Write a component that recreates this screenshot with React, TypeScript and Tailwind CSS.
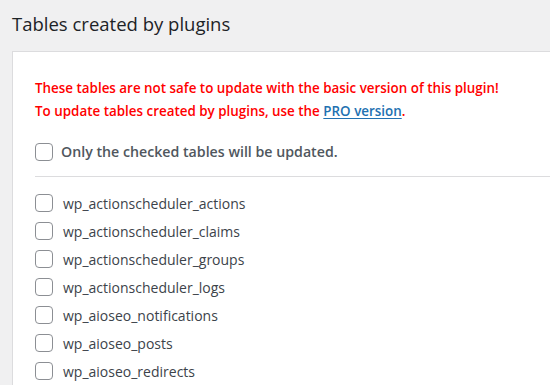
import React from 'react';

const tables = [
  'wp_actionscheduler_actions',
  'wp_actionscheduler_claims',
  'wp_actionscheduler_groups',
  'wp_actionscheduler_logs',
  'wp_aioseo_notifications',
  'wp_aioseo_posts',
  'wp_aioseo_redirects',
];

function Box() {
  return <span className="block w-[18px] h-[18px] shrink-0 rounded-[4px] border border-[#8c8f94] bg-white" />;
}

export default function App() {
  return (
    <div
      className="w-[550px] h-[385px] overflow-hidden bg-[#f0f0f1] text-[#3c434a]"
      style={{ fontFamily: '"Open Sans", "Noto Sans", sans-serif' }}
    >
      {/* HEADER */}
      <h2 className="pl-3 pt-[11px] h-[51px] text-[18.5px] leading-[26px] text-[#1d2327]">Tables created by plugins</h2>

      {/* PANEL */}
      <div className="ml-3 w-[600px] border-l border-t border-[#dcdcde] bg-white pl-[22px] pt-[25px]">
        <p className="text-[13.4px] font-semibold leading-[23px] text-[#ff0000]">
          These tables are not safe to update with the basic version of this plugin!
          <br />
          To update tables created by plugins, use the{' '}
          <a className="text-[#2271b1] underline underline-offset-2">PRO version</a>.
        </p>

        <label className="mt-[20px] flex items-center gap-[8px] h-[18px]">
          <Box />
          <span className="text-[14.2px] font-semibold text-[#50575e]">Only the checked tables will be updated.</span>
        </label>

        <div className="mt-[15px] border-t border-[#dcdcde]" />

        <ul className="pt-[12px]">
          {tables.map((t) => (
            <li key={t} className="flex items-center gap-[10px] h-[28px]">
              <Box />
              <span className="text-[14px] text-[#3c434a]">{t}</span>
            </li>
          ))}
        </ul>
      </div>
    </div>
  );
}
